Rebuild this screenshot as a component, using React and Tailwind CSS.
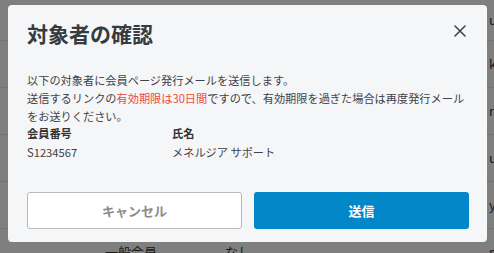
export default function App() {
  const rows = [
    { h: "h-[41px]", a: "", b: "", c: "uehara@example.jp" },
    { h: "h-[47px]", a: "", b: "", c: "kr.sato@example.jp" },
    { h: "h-[47px]", a: "", b: "", c: "ri.tanaka@example.jp" },
    { h: "h-[47px]", a: "", b: "", c: "uiyama@example.jp" },
    { h: "h-[47px]", a: "", b: "", c: "yi.kato@example.jp" },
    { h: "h-[47px]", a: "一般会員", b: "なし", c: "m-ito@example.jp" },
  ];
  return (
    <div
      className="relative w-[494px] h-[253px] overflow-hidden bg-white text-[#333]"
      style={{ fontFamily: '"Noto Sans CJK JP", "Noto Sans", sans-serif' }}
    >
      <div className="flex flex-col">
        {rows.map((r, i) => (
          <div
            key={i}
            className={`${r.h} flex items-center border-b border-[#e6e6e6] text-[13px] shrink-0`}
          >
            <div className="w-[105px] shrink-0" />
            <div className="w-[120px] shrink-0">{r.a}</div>
            <div className="w-[264px] shrink-0">{r.b}</div>
            <div className="whitespace-nowrap">{r.c}</div>
          </div>
        ))}
      </div>
      <div className="absolute inset-0 bg-black/50 pl-[8px] pt-[5px]">
        <div className="w-[479px] h-[237px] bg-[#f5f6f8] rounded-[4px] pl-[19px] pr-[18px] pt-[14px] flex flex-col">
          <div className="flex items-center justify-between">
            <div className="text-[21px] leading-[28px] font-bold text-[#363b40]">
              対象者の確認
            </div>
            <svg
              width="12"
              height="12"
              viewBox="0 0 12 12"
              className="mr-[3px] mt-[-4px]"
            >
              <path
                d="M1 1 L11 11 M11 1 L1 11"
                stroke="#404448"
                strokeWidth="1.6"
                strokeLinecap="round"
              />
            </svg>
          </div>
          <div className="mt-[24px] text-[11.2px] leading-[18px] text-[#3f4246] whitespace-nowrap">
            以下の対象者に会員ページ発行メールを送信します。
            <br />
            送信するリンクの
            <span className="text-[#ee4a3e]">有効期限は30日間</span>
            ですので、有効期限を過ぎた場合は再度発行メール
            <br />
            をお送りください。
          </div>
          <div className="grid grid-cols-[145px_1fr] text-[11.2px] text-[#333]">
            <div className="font-bold leading-[16px] mt-[0px]">会員番号</div>
            <div className="font-bold leading-[16px] mt-[0px]">氏名</div>
            <div className="leading-[18px] mt-[2px] text-[#3f4246]">S1234567</div>
            <div className="leading-[18px] mt-[2px] text-[#3f4246]">メネルジア サポート</div>
          </div>
          <div className="mt-auto mb-[13px] flex gap-[12px]">
            <button className="w-[215px] h-[37px] bg-white border border-[#b9b9b9] rounded-[3px] text-[13px] font-bold text-[#8c8c8c]">
              キャンセル
            </button>
            <button className="w-[215px] h-[37px] bg-[#0288c9] rounded-[3px] text-[13px] font-bold text-white">
              送信
            </button>
          </div>
        </div>
      </div>
    </div>
  );
}
